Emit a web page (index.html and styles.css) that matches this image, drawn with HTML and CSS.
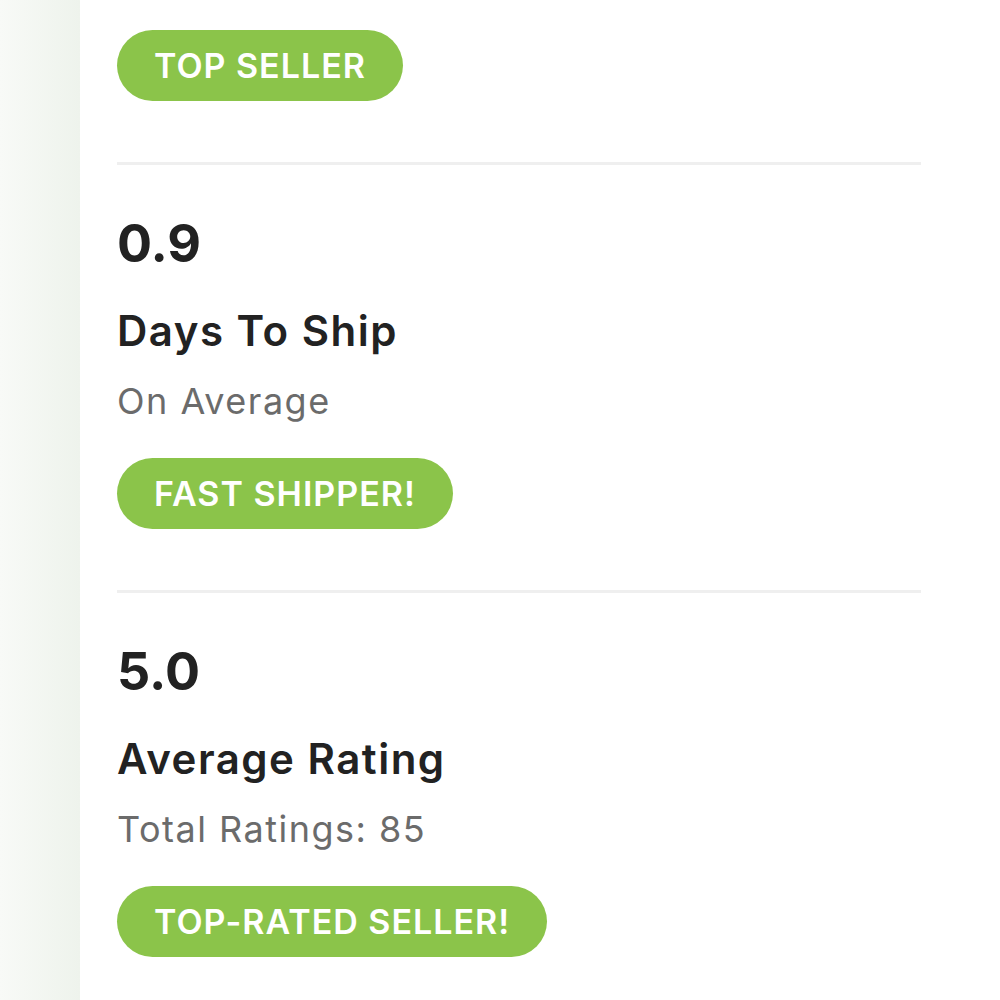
FILE: index.html
```html
<!DOCTYPE html>
<html>
<head>
    <title>Seller Stats</title>
    <link rel="stylesheet" href="styles.css">
</head>
<body>
    <div class="rail"></div>
    <div class="main">
        <div class="badge">TOP SELLER</div>

        <div class="stat">
            <div class="stat-value">0.9</div>
            <div class="stat-title">Days To Ship</div>
            <div class="stat-sub">On Average</div>
            <div class="badge">FAST SHIPPER!</div>
        </div>

        <div class="stat">
            <div class="stat-value">5.0</div>
            <div class="stat-title">Average Rating</div>
            <div class="stat-sub">Total Ratings: 85</div>
            <div class="badge">TOP-RATED SELLER!</div>
        </div>
    </div>
</body>
</html>
```

FILE: styles.css
```css
body {
    margin: 0;
    display: flex;
    min-height: 1000px;
    font-family: Inter, "Open Sans", sans-serif;
    background: #fff;
    color: #222;
}
.rail {
    width: 80px;
    flex-shrink: 0;
    background: linear-gradient(to right, #f8faf7, #eef3ec);
}
.main {
    flex: 1;
    padding: 30px 79px 0 37px;
}
.badge {
    display: inline-block;
    height: 71px;
    line-height: 71px;
    padding: 0 37px;
    border-radius: 36px;
    background: #8bc44a;
    color: #fff;
    font-size: 34px;
    font-weight: 600;
    letter-spacing: 1px;
}
.stat {
    margin-top: 61px;
    padding-top: 53px;
    border-top: 3px solid #efefef;
}
.stat-value {
    font-size: 52px;
    font-weight: 700;
    line-height: 1;
}
.stat-title {
    margin-top: 40px;
    font-size: 42px;
    font-weight: 600;
    line-height: 1;
    letter-spacing: 1.5px;
}
.stat-sub {
    margin-top: 31px;
    font-size: 36px;
    line-height: 1;
    letter-spacing: 1.5px;
    color: #6b6b6b;
}
.stat .badge {
    margin-top: 39px;
}
```
